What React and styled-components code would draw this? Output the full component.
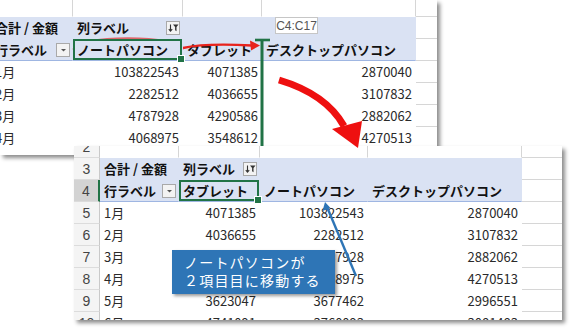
import React from 'react';
import styled, { createGlobalStyle, css } from 'styled-components';

const Global = createGlobalStyle`
  html, body { margin: 0; padding: 0; background: #fff; }
  * { box-sizing: border-box; }
`;

const Canvas = styled.div`
  position: relative;
  width: 571px;
  height: 331px;
  overflow: hidden;
  background: #fff;
  font-family: "Noto Sans CJK JP", "Liberation Sans", sans-serif;
  font-size: 13px;
  color: #111;
`;

const SheetWindow = styled.div`
  position: absolute;
  left: ${p => p.$x}px;
  top: ${p => p.$y}px;
  width: ${p => p.$w}px;
  height: ${p => p.$h}px;
  overflow: hidden;
  background: #fff;
  box-shadow: 3px 3px 4px rgba(0, 0, 0, 0.45);
`;

const SheetGrid = styled.div`
  display: grid;
  grid-template-columns: ${p => p.$cols};
  grid-auto-rows: 22px;
  margin-left: ${p => p.$dx}px;
  margin-top: ${p => p.$dy}px;
`;

const Cell = styled.div`
  position: relative;
  display: flex;
  align-items: center;
  justify-content: ${p => (p.$right ? 'flex-end' : p.$split ? 'space-between' : 'flex-start')};
  padding: 0 ${p => (p.$split ? 2 : 3)}px 0 4px;
  background: ${p => (p.$band ? '#dae2f3' : '#fff')};
  border-right: 1px solid ${p => (p.$vgrid ? '#d6d6d6' : 'transparent')};
  border-bottom: 1px solid ${p => (p.$blueLine ? '#9fb6e2' : p.$hgrid ? '#d6d6d6' : 'transparent')};
  font-weight: ${p => (p.$bold ? 700 : 400)};
  color: ${p => (p.$bold ? '#111' : '#2a2a2a')};
  white-space: nowrap;
  ${p => p.$selected && css`
    box-shadow: inset 0 0 0 2px #217346;
    z-index: 1;
    &::after {
      content: '';
      position: absolute;
      right: -3px;
      bottom: -3px;
      width: 6px;
      height: 6px;
      background: #217346;
      border: 1px solid #fff;
    }
  `}
`;

const RowHead = styled.div`
  display: flex;
  align-items: center;
  justify-content: center;
  background: ${p => (p.$active ? '#d3d3d3' : '#f4f4f4')};
  border-right: ${p => (p.$active ? '2px solid #217346' : '1px solid #c9c9c9')};
  border-bottom: 1px solid #dcdcdc;
  color: #444;
  font-family: "Liberation Sans", "Noto Sans CJK JP", sans-serif;
  font-size: 14px;
`;

const MiniButton = styled.span`
  display: inline-flex;
  align-items: center;
  justify-content: center;
  width: 14px;
  height: 14px;
  border: 1px solid #a9a9a9;
  background: #f3f3f3;
  flex: none;
`;

const Tooltip = styled.div`
  position: absolute;
  left: 275px;
  top: 17px;
  width: 43px;
  height: 17px;
  border: 1px solid #c6c6c6;
  background: #fff;
  color: #555;
  font-family: "Liberation Sans", sans-serif;
  font-size: 12px;
  display: flex;
  align-items: center;
  justify-content: center;
  z-index: 3;
`;

const Overlay = styled.svg`
  position: absolute;
  left: 0;
  top: 0;
  pointer-events: none;
`;

const Callout = styled.div`
  position: absolute;
  left: 172px;
  top: 250px;
  width: 163px;
  height: 44px;
  padding: 3px 0 0 12px;
  background: #2e75b6;
  color: #fff;
  font-size: 14px;
  line-height: 18px;
  letter-spacing: 1.2px;
  box-shadow: 2px 2px 3px rgba(0, 0, 0, 0.4);
`;

const FilterIcon = () => (
  <MiniButton>
    <svg width="11" height="10" viewBox="0 0 11 10">
      <path d="M2.5 1.5v6.5M0.8 6.2L2.5 8.2L4.2 6.2" stroke="#333" strokeWidth="1.1" fill="none" />
      <path d="M5 1.5h5.5l-2 2.6v4.2l-1.4-1v-3.2z" fill="#333" />
    </svg>
  </MiniButton>
);

const DropIcon = () => (
  <MiniButton>
    <svg width="9" height="6" viewBox="0 0 9 6">
      <path d="M2 2h5l-2.5 2.5z" fill="#555" />
    </svg>
  </MiniButton>
);

function PivotRows({ rowHeads, headers, data, selectedCol }) {
  const cells = [];
  const n = headers.length;
  const rh = (num, key, active) =>
    rowHeads ? <RowHead key={key} $active={active}>{num}</RowHead> : null;

  cells.push(rh(2, 'rh2'));
  for (let i = 0; i <= n; i++) cells.push(<Cell key={`r2-${i}`} $vgrid />);
  cells.push(<Cell key="r2-e" $vgrid $hgrid />);

  cells.push(rh(3, 'rh3'));
  cells.push(<Cell key="r3-a" $band $bold>合計 / 金額</Cell>);
  cells.push(
    <Cell key="r3-b" $band $bold $split>
      <span>列ラベル</span>
      <FilterIcon />
    </Cell>
  );
  for (let i = 1; i < n; i++) cells.push(<Cell key={`r3-${i}`} $band />);
  cells.push(<Cell key="r3-e" $vgrid $hgrid />);

  cells.push(rh(4, 'rh4', true));
  cells.push(
    <Cell key="r4-a" $band $bold $split $blueLine>
      <span>行ラベル</span>
      <DropIcon />
    </Cell>
  );
  headers.forEach((h, i) =>
    cells.push(
      <Cell key={`r4-${i}`} $band $bold $blueLine $selected={i === selectedCol}>
        {h}
      </Cell>
    )
  );
  cells.push(<Cell key="r4-e" $vgrid $hgrid />);

  data.forEach((row, r) => {
    cells.push(rh(5 + r, `rh${5 + r}`));
    row.forEach((v, c) =>
      cells.push(
        <Cell key={`d${r}-${c}`} $right={c > 0}>
          {v}
        </Cell>
      )
    );
    cells.push(<Cell key={`d${r}-e`} $vgrid $hgrid />);
  });
  return cells;
}

const topData = [
  ['1月', '103822543', '4071385', '2870040'],
  ['2月', '2282512', '4036655', '3107832'],
  ['3月', '4787928', '4290586', '2882062'],
  ['4月', '4068975', '3548612', '4270513'],
  ['5月', '3677462', '3623047', '2996551'],
];

const bottomData = [
  ['1月', '4071385', '103822543', '2870040'],
  ['2月', '4036655', '2282512', '3107832'],
  ['3月', '4290586', '4787928', '2882062'],
  ['4月', '3548612', '4068975', '4270513'],
  ['5月', '3623047', '3677462', '2996551'],
  ['6月', '4741091', '3760093', '3081483'],
];

export default function App() {
  return (
    <Canvas>
      <Global />
      <SheetWindow $x={0} $y={0} $w={437} $h={155}>
        <SheetGrid $cols="82px 110px 79px 154px 60px" $dx={-9} $dy={-5}>
          <PivotRows
            headers={['ノートパソコン', 'タブレット', 'デスクトップパソコン']}
            data={topData}
            selectedCol={0}
          />
        </SheetGrid>
        <Tooltip>C4:C17</Tooltip>
      </SheetWindow>

      <SheetWindow $x={74} $y={146} $w={488} $h={174}>
        <SheetGrid $cols="26px 79px 81px 108px 154px 60px" $dx={0} $dy={-10}>
          <PivotRows
            rowHeads
            headers={['タブレット', 'ノートパソコン', 'デスクトップパソコン']}
            data={bottomData}
            selectedCol={0}
          />
        </SheetGrid>
      </SheetWindow>

      <Overlay width="571" height="331" viewBox="0 0 571 331">
        <ellipse cx="128" cy="49" rx="54" ry="10.5" fill="none" stroke="rgba(222,60,60,0.75)" strokeWidth="2.6" />
        <path d="M183 48 Q205 43 252 45.5" fill="none" stroke="#e8231c" strokeWidth="2.4" />
        <path d="M260 45.5 L250 40.5 L251 50.5 Z" fill="#e8231c" />
        <path d="M262 40 V146" stroke="#217346" strokeWidth="3" />
        <path d="M255 40 H270" stroke="#217346" strokeWidth="2.6" />
        <path d="M279 80 Q326 94 344 126" fill="none" stroke="#ee1010" strokeWidth="7" />
        <path d="M358 148 L332 129 L362 121 Z" fill="#ee1010" />
        <path d="M356 276 L327 207" stroke="#2e75b6" strokeWidth="2.4" />
        <path d="M325 202 L322.5 211 L330.5 208 Z" fill="#2e75b6" />
      </Overlay>

      <Callout>
        ノートパソコンが
        <br />
        ２項目目に移動する
      </Callout>
    </Canvas>
  );
}
